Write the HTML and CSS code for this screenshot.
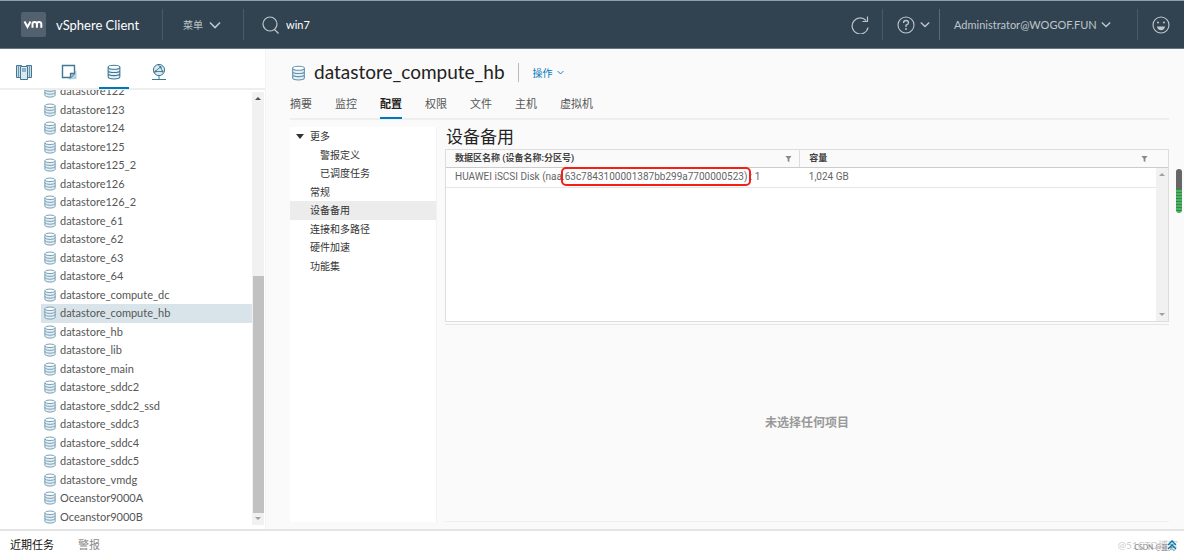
FILE: index.html
```html
<!DOCTYPE html>
<html lang="zh-CN">
<head>
<meta charset="utf-8">
<title>vSphere Client</title>
<link rel="stylesheet" href="styles.css">
</head>
<body>
<svg class="defs" aria-hidden="true">
  <symbol id="db" viewBox="0 0 14 15">
    <path d="M1.5 3v9c0 1.1 2.4 2 5.500 2s5.500-.9 5.500-2V3z" fill="#e6eff4"/>
    <path d="M1.500 3v9c0 1.100 2.400 2 5.500 2s5.500-.9 5.500-2V3M1.500 6c0 1.100 2.400 1.900 5.500 1.900s5.500-.8 5.500-1.900M1.500 9c0 1.100 2.400 1.900 5.500 1.900s5.500-.8 5.500-1.900" fill="none" stroke="currentColor"/>
    <ellipse cx="7" cy="3" rx="5.500" ry="1.900" fill="#fff" stroke="currentColor"/>
  </symbol>
  <symbol id="chev" viewBox="0 0 12 8"><path d="M1 1.500l5 5 5-5" fill="none" stroke="currentColor" stroke-width="1.600"/></symbol>
  <symbol id="funnel" viewBox="0 0 8 8"><path d="M.5 1h7L5 4.200V8L3 7V4.200z" fill="currentColor"/></symbol>
</svg>
<div class="app">
  <header class="topbar">
    <div class="brand"><svg class="logo" viewBox="0 0 25 25"><rect width="25" height="25" rx="2" fill="#52616d"/><path d="M3.500 9.500l3 5.500 3-5.500M11.500 15.800v-3.800q0-2 2.200-2t2.200 2v3.800m0-3.800q0-2 2.200-2t2.200 2v3.800" fill="none" stroke="#fff" stroke-width="2"/></svg><span class="product">vSphere Client</span></div>
    <button class="menu">菜单 <svg class="chev"><use href="#chev"/></svg></button>
    <label class="search"><svg class="glass" viewBox="0 0 18 18"><path d="M12.500 13.500l4 4" stroke="currentColor" stroke-width="1.200"/><circle cx="8" cy="8" r="7" fill="none" stroke="currentColor" stroke-width="1.200"/></svg><input class="query" type="text" value="win7" aria-label="搜索"></label>
    <button class="tool refresh" aria-label="刷新"><svg class="round" viewBox="0 0 18 18"><path d="M17 11.500A8 8 0 1 1 15 4.500M11.500 5.500h5V.5" fill="none" stroke="currentColor" stroke-width="1.200"/></svg></button>
    <button class="tool help" aria-label="帮助"><svg class="round" viewBox="0 0 18 18"><circle cx="9" cy="9" r="8" fill="none" stroke="currentColor" stroke-width="1.100"/><path d="M6.500 7q0-2.500 2.500-2.500T11.500 6.800Q11.500 8.300 9 9.200V11" fill="none" stroke="currentColor" stroke-width="1.300"/><circle cx="9" cy="13" r=".9" fill="currentColor"/></svg><svg class="chev small"><use href="#chev"/></svg></button>
    <button class="tool user"><span>Administrator@WOGOF.FUN</span><svg class="chev small"><use href="#chev"/></svg></button>
    <button class="tool smile" aria-label="反馈"><svg class="round" viewBox="0 0 18 18"><circle cx="9" cy="9" r="8" fill="none" stroke="currentColor" stroke-width="1.100"/><circle cx="6" cy="6.500" r="1" fill="currentColor"/><circle cx="12" cy="6.500" r="1" fill="currentColor"/><path d="M5 10.500h8q-.6 3.800-4 3.800T5 10.500z" fill="currentColor"/></svg></button>
  </header>
  <div class="work">
    <aside class="nav">
      <div class="views">
        <button class="view" aria-label="主机和集群"><svg class="vicon" viewBox="0 0 16 16"><path d="M.5 1.500h5v12h-5zM10.500 1.500h5v12h-5z" fill="#c9dce6" stroke="currentColor"/><path d="M2.500 1.500v12M13.500 1.500v12" stroke="currentColor" stroke-width=".7"/><path d="M4.500 2.500h7v13h-7z" fill="#dce8ee" stroke="currentColor"/><path d="M6 5h4M6 7h4" stroke="currentColor"/></svg></button>
        <button class="view" aria-label="虚拟机和模板"><svg class="vicon" viewBox="0 0 16 16"><path d="M7 15.500L15.500 15V6" fill="#b9d0dc"/><path d="M1.500 1.500h12v8l-4 4h-8z" fill="#fff" stroke="currentColor" stroke-width="1.400"/><path d="M13.500 9.500h-4v4" fill="#b9d0dc" stroke="currentColor" stroke-width="1.300"/></svg></button>
        <button class="view active" aria-label="存储"><svg class="vicon"><use href="#db"/></svg></button>
        <button class="view" aria-label="网络"><svg class="vicon" viewBox="0 0 16 16"><circle cx="8" cy="6" r="5.600" fill="#dce8ee" stroke="currentColor"/><path d="M4 7.500L9.500 3l2 4.500zM9.500 3L7 .8M4 7.500L3 9" fill="none" stroke="currentColor" stroke-width=".9"/><circle cx="4.500" cy="7.500" r="1.100" fill="currentColor"/><circle cx="9.500" cy="3.200" r="1.100" fill="currentColor"/><circle cx="11.500" cy="7.500" r="1.100" fill="currentColor"/><path d="M8 11.500v4M1 15.500h14" stroke="currentColor"/></svg></button>
      </div>
      <div class="treewrap">
        <ul class="tree">
          <li><svg class="ds"><use href="#db"/></svg>datastore122</li>
          <li><svg class="ds"><use href="#db"/></svg>datastore123</li>
          <li><svg class="ds"><use href="#db"/></svg>datastore124</li>
          <li><svg class="ds"><use href="#db"/></svg>datastore125</li>
          <li><svg class="ds"><use href="#db"/></svg>datastore125_2</li>
          <li><svg class="ds"><use href="#db"/></svg>datastore126</li>
          <li><svg class="ds"><use href="#db"/></svg>datastore126_2</li>
          <li><svg class="ds"><use href="#db"/></svg>datastore_61</li>
          <li><svg class="ds"><use href="#db"/></svg>datastore_62</li>
          <li><svg class="ds"><use href="#db"/></svg>datastore_63</li>
          <li><svg class="ds"><use href="#db"/></svg>datastore_64</li>
          <li><svg class="ds"><use href="#db"/></svg>datastore_compute_dc</li>
          <li class="selected"><svg class="ds"><use href="#db"/></svg>datastore_compute_hb</li>
          <li><svg class="ds"><use href="#db"/></svg>datastore_hb</li>
          <li><svg class="ds"><use href="#db"/></svg>datastore_lib</li>
          <li><svg class="ds"><use href="#db"/></svg>datastore_main</li>
          <li><svg class="ds"><use href="#db"/></svg>datastore_sddc2</li>
          <li><svg class="ds"><use href="#db"/></svg>datastore_sddc2_ssd</li>
          <li><svg class="ds"><use href="#db"/></svg>datastore_sddc3</li>
          <li><svg class="ds"><use href="#db"/></svg>datastore_sddc4</li>
          <li><svg class="ds"><use href="#db"/></svg>datastore_sddc5</li>
          <li><svg class="ds"><use href="#db"/></svg>datastore_vmdg</li>
          <li><svg class="ds"><use href="#db"/></svg>Oceanstor9000A</li>
          <li><svg class="ds"><use href="#db"/></svg>Oceanstor9000B</li>
        </ul>
        <div class="scroll"><i class="up dark"></i><b class="thumb"></b><i class="down"></i></div>
      </div>
    </aside>
    <main class="main">
      <div class="heading"><svg class="hicon"><use href="#db"/></svg><h1>datastore_compute_hb</h1><button class="actions">操作 <svg class="chev tiny"><use href="#chev"/></svg></button></div>
      <nav class="tabs"><a href="#">摘要</a><a href="#">监控</a><a href="#" class="on">配置</a><a href="#">权限</a><a href="#">文件</a><a href="#">主机</a><a href="#">虚拟机</a></nav>
      <div class="config">
        <nav class="side">
          <ul class="sidelist">
            <li><i class="caret"></i><a href="#">更多</a></li>
            <li class="sub"><a href="#">警报定义</a></li>
            <li class="sub"><a href="#">已调度任务</a></li>
            <li><a href="#">常规</a></li>
            <li class="current"><a href="#">设备备用</a></li>
            <li><a href="#">连接和多路径</a></li>
            <li><a href="#">硬件加速</a></li>
            <li><a href="#">功能集</a></li>
          </ul>
        </nav>
        <section class="detail">
          <h2>设备备用</h2>
          <div class="grid">
            <table>
              <thead><tr><th class="name"><div class="cell">数据区名称 (设备名称:分区号)<svg class="funnel"><use href="#funnel"/></svg></div></th><th><div class="cell last">容量<svg class="funnel"><use href="#funnel"/></svg></div></th></tr></thead>
              <tbody><tr><td>HUAWEI iSCSI Disk (naa.<span class="mark">63c7843100001387bb299a7700000523)</span> : 1</td><td>1,024 GB</td></tr></tbody>
            </table>
            <div class="gridbody"><div class="scroll wide"><i class="up"></i><i class="down"></i></div></div>
          </div>
          <div class="empty">未选择任何项目</div>
        </section>
      </div>
      <span class="meter"></span>
    </main>
  </div>
  <footer class="foot">
    <button class="task on">近期任务</button><button class="task">警报</button>
    <span class="blog">@51CTO博客</span><span class="csdn">CSDN @蓝天</span>
    <button class="expand" aria-label="展开"><svg viewBox="0 0 10 10"><path d="M1 5l4-4 4 4M1 9l4-4 4 4" fill="none" stroke="#0079b8" stroke-width="1.400"/></svg></button>
  </footer>
</div>
</body>
</html>
```
FILE: styles.css
```css
* { box-sizing: border-box; }
body {
  margin: 0;
  font: 11px/16px Lato, "Noto Sans CJK SC", sans-serif;
  color: #565656;
  background: #fafafa;
}
ul { list-style: none; margin: 0; padding: 0; }
button { font: inherit; color: inherit; background: none; border: 0; padding: 0; display: flex; align-items: center; }
a { color: inherit; text-decoration: none; }
.defs { position: absolute; width: 0; height: 0; }
.app { height: 100vh; display: flex; flex-direction: column; overflow: hidden; }

.topbar { height: 49px; flex: none; display: flex; align-items: center; background: #314351; color: #bfc6cb; border-top: 1px solid #90a0ab; border-bottom: 1px solid #667682; }
.brand { display: flex; align-items: center; gap: 10px; padding-left: 21px; width: 162px; }
.logo { width: 25px; height: 25px; }
.product { font-size: 13px; color: #fff; white-space: nowrap; }
.menu { height: 31px; width: 81px; padding-left: 20px; gap: 6px; font-size: 10px; border-left: 1px solid #495965; }
.chev { width: 12px; height: 8px; flex: none; }
.chev.small { width: 10px; height: 7px; }
.chev.tiny { width: 7px; height: 5px; }
.search { height: 31px; display: flex; align-items: center; gap: 6px; flex: 1; border-left: 1px solid #495965; padding-left: 18px; }
.glass { width: 18px; height: 18px; }
.query { font: inherit; color: #fff; background: none; border: 0; outline: 0; padding: 0; width: 160px; }
.round { width: 18px; height: 18px; flex: none; }
.tool { height: 31px; flex: none; }
.refresh { width: 31px; }
.help { width: 57px; padding-left: 14px; gap: 5px; border-left: 1px solid #495965; }
.user { width: 198px; padding-left: 14px; gap: 4px; border-left: 1px solid #5b6a75; }
.smile { width: 47px; padding-left: 14px; border-left: 1px solid #495965; }

.work { flex: 1; min-height: 0; display: flex; }
.nav { width: 266px; flex: none; background: #fff; border-right: 1px solid #f3f3f3; display: flex; flex-direction: column; }
.views { height: 41px; flex: none; display: flex; gap: 15px; padding-left: 9px; border-bottom: 2px solid #eee; }
.view { width: 30px; height: 40px; justify-content: center; padding-top: 8px; border-bottom: 2px solid transparent; color: #3e7896; }
.view.active { border-bottom-color: #0079b8; }
.vicon { width: 16px; height: 16px; }
.treewrap { flex: 1; min-height: 0; display: flex; overflow: hidden; }
.tree { flex: 1; margin-top: -8px; margin-left: 41px; margin-bottom: 3px; display: grid; grid-auto-rows: 1fr; }
.tree li { display: flex; align-items: center; gap: 3px; padding-left: 2px; min-height: 0; line-height: 18px; }
.tree .selected { background: #d9e4ea; }
.ds { width: 14px; height: 14px; color: #6f9bb3; }
.scroll { width: 12px; margin: 2px 1px 4px 0; background: #f1f1f1; display: flex; flex-direction: column; align-items: center; justify-content: space-between; padding: 5px 0; }
.up, .down { border: 3px solid transparent; width: 0; height: 0; }
.up { border-top: 0; border-bottom-color: #a0a0a0; }
.up.dark { border-bottom-color: #505050; }
.down { border-bottom: 0; border-top-color: #a0a0a0; }
.thumb { width: 11px; height: 56%; margin-top: auto; margin-bottom: 4px; background: #c1c1c1; }

.main { flex: 1; min-width: 0; padding: 8px 15px 7px 24px; display: flex; flex-direction: column; position: relative; }
.heading { height: 31px; display: flex; align-items: center; padding-left: 1px; }
.hicon { width: 15px; height: 16px; color: #5f93ae; }
h1 { margin: 0 13px 0 8px; padding-bottom: 2px; font-size: 19px; line-height: 24px; font-weight: 400; color: #222; }
.actions { height: 19px; border-left: 1px solid #bbb; padding-left: 14px; gap: 4px; font-size: 10px; color: #0079b8; }
.tabs { display: flex; gap: 23px; height: 32px; border-bottom: 2px solid #eee; }
.tabs a { padding-top: 8px; line-height: 16px; height: 31px; }
.tabs .on { color: #222; font-weight: 700; border-bottom: 2px solid #0079b8; }
.config { flex: 1; min-height: 0; display: flex; gap: 8px; padding-top: 7px; }
.side { width: 147px; flex: none; background: #fff; border-right: 1px solid #f2f2f2; font-size: 10px; color: #333; }
.sidelist { display: grid; grid-auto-rows: 1fr; height: 148px; }
.sidelist li { display: flex; align-items: center; padding-left: 20px; position: relative; }
.sidelist .sub { padding-left: 30px; }
.sidelist .current { background: #ececec; }
.caret { position: absolute; left: 6px; border: 4px solid transparent; border-top: 5px solid #333; border-bottom: 0; }

.detail { flex: 1; min-width: 0; display: flex; flex-direction: column; }
h2 { margin: 0; padding: 0 0 2px 1px; font-size: 17px; line-height: 20px; font-weight: 400; color: #222; }
.grid { height: 173px; flex: none; display: flex; flex-direction: column; border: 1px solid #ddd; background: #fff; position: relative; }
table { width: 100%; border-collapse: collapse; table-layout: fixed; font-family: Roboto, "Noto Sans CJK SC", sans-serif; font-size: 10px; }
th { height: 17px; padding: 0; background: #fafafa; border-bottom: 1px solid #ccc; color: #444; text-align: left; font-size: 9px; }
.name { width: 49%; border-right: 1px solid #ddd; }
.cell { display: flex; align-items: center; justify-content: space-between; line-height: 16px; padding: 0 7px 0 9px; }
.cell.last { padding-right: 20px; }
.funnel { width: 7px; height: 7px; color: #888; }
td { height: 20px; padding: 0 9px; border-bottom: 1px solid #e6e6e6; white-space: nowrap; line-height: 16px; color: #666; }
.mark { outline: 2px solid #f51f16; outline-offset: 2px; border-radius: 1px; }
.gridbody { flex: 1; }
.scroll.wide { position: absolute; top: 18px; right: 0; bottom: 0; margin: 0; }
.empty { flex: 1; margin-top: 2px; border-top: 1px solid #e6e6e6; border-bottom: 1px solid #f0f0f0; display: flex; align-items: center; justify-content: center; font-size: 12px; font-weight: 700; color: #999; }
.meter { position: absolute; right: 2px; top: 120px; width: 6px; height: 44px; border-radius: 3px; background: linear-gradient(#666 20px, transparent 20px), repeating-linear-gradient(#3fb95c 0 2px, #50795a 2px 3px); }

.foot { height: 27px; flex: none; display: flex; align-items: center; gap: 24px; padding: 2px 10px 0; background: #fff; border-top: 2px solid #e4e4e4; position: relative; }
.task { color: #888; }
.task.on { color: #111; }
.blog, .csdn { position: absolute; white-space: nowrap; }
.blog { right: 6px; top: 6px; font-size: 10px; color: #ccc; }
.csdn { right: 9px; top: 8px; font-size: 7px; color: #888; }
.expand { margin-left: auto; margin-right: -3px; position: relative; }
.expand svg { width: 10px; height: 10px; }
```
